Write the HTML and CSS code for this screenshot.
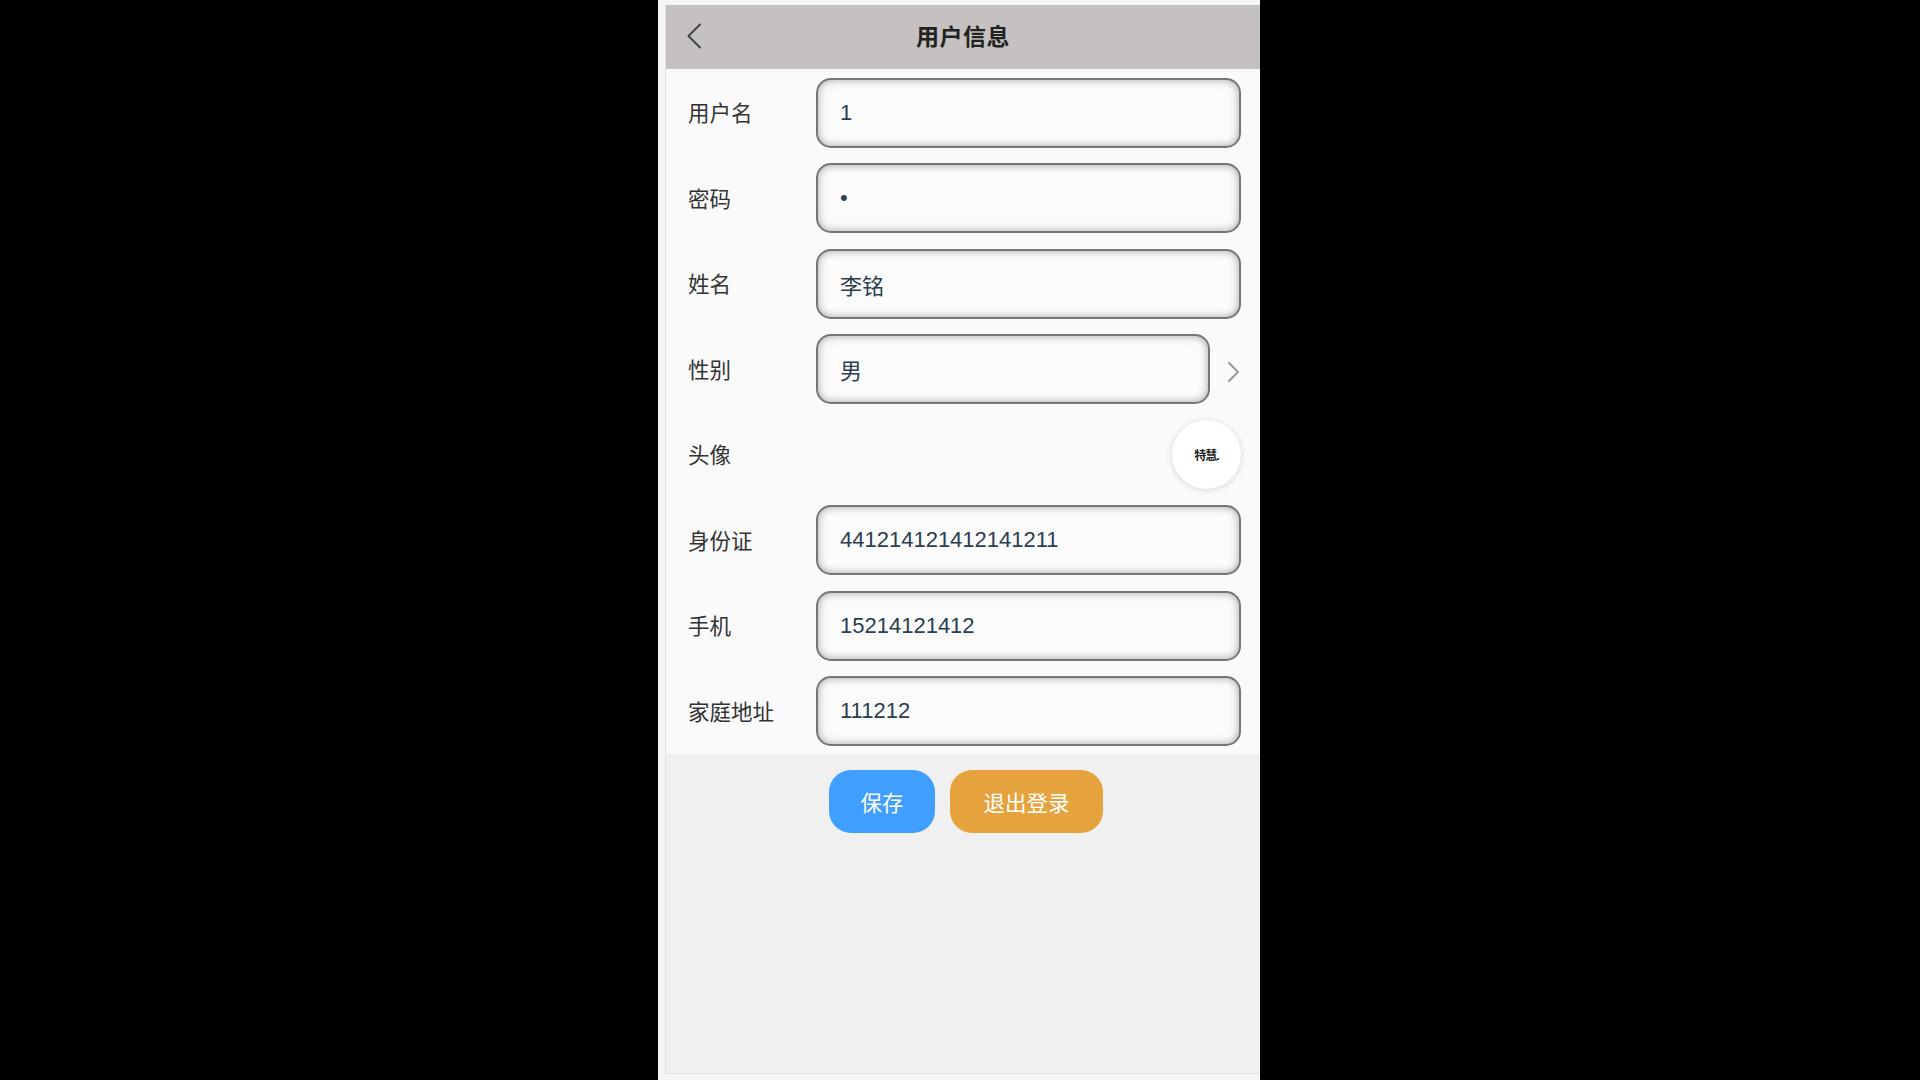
FILE: index.html
```html
<!DOCTYPE html>
<html lang="zh-CN">
<head>
  <meta charset="UTF-8" />
  <meta name="viewport" content="width=device-width, initial-scale=1.0" />
  <title>用户信息</title>
  <link rel="stylesheet" href="styles.css">
</head>
<body>
  <div class="phone">
    <div class="app">
      <!-- 顶部导航 -->
      <div class="header">
        <svg class="back" width="16" height="26" viewBox="0 0 16 26">
          <path d="M14 1.5 L2.5 13 L14 24.5" fill="none" stroke="#444" stroke-width="2" stroke-linecap="round" stroke-linejoin="round"/>
        </svg>
        <div class="title">用户信息</div>
      </div>

      <!-- 表单 -->
      <form class="info-form">
        <div class="row">
          <label class="label">用户名</label>
          <input class="field" type="text" value="1" />
        </div>
        <div class="row">
          <label class="label">密码</label>
          <input class="field" type="password" value="1" />
        </div>
        <div class="row">
          <label class="label">姓名</label>
          <input class="field" type="text" value="李铭" />
        </div>
        <div class="row">
          <label class="label">性别</label>
          <input class="field" type="text" value="男" />
          <span class="arrow">
            <svg width="14" height="22" viewBox="0 0 14 22">
              <path d="M2 2 L11 11 L2 20" fill="none" stroke="#999" stroke-width="2" stroke-linecap="round" stroke-linejoin="round"/>
            </svg>
          </span>
        </div>
        <div class="row">
          <label class="label">头像</label>
          <div class="avatar"><span>特慧.</span></div>
        </div>
        <div class="row">
          <label class="label">身份证</label>
          <input class="field" type="text" value="441214121412141211" />
        </div>
        <div class="row">
          <label class="label">手机</label>
          <input class="field" type="text" value="15214121412" />
        </div>
        <div class="row">
          <label class="label">家庭地址</label>
          <input class="field" type="text" value="111212" />
        </div>
      </form>

      <div class="actions">
        <button type="button" class="btn btn-save">保存</button>
        <button type="button" class="btn btn-logout">退出登录</button>
      </div>
    </div>
  </div>
</body>
</html>
```

FILE: styles.css
```css
html, body {
  margin: 0;
  height: 100%;
}

body {
  background-color: #000;
  display: flex;
  justify-content: center;
  font-family: "Liberation Sans", "Noto Sans CJK SC", sans-serif;
  color: #333;
}

.phone {
  width: 602px;
  height: 1080px;
  box-sizing: border-box;
  padding: 5px 0 6px 7px;
  margin-left: -2px;
  background-color: #f6f6f6;
}

.app {
  height: 100%;
  background-color: #f0f0f0;
  border-left: 1px solid #e2e2e2;
  border-bottom: 1px solid #e2e2e2;
  box-sizing: border-box;
  display: flex;
  flex-direction: column;
}

.header {
  position: relative;
  height: 64px;
  box-sizing: border-box;
  padding-bottom: 5px;
  background-color: #c5c1c0;
  display: flex;
  align-items: center;
  justify-content: center;
}

.back {
  position: absolute;
  left: 20px;
  top: 18px;
}

.title {
  font-size: 23px;
  font-weight: bold;
  color: #222;
  letter-spacing: 0.5px;
}

.info-form {
  background-color: #fafafa;
  padding-top: 1px;
}

.row {
  height: 85.5px;
  display: flex;
  align-items: center;
  padding: 0 19px 0 22px;
}

.label {
  width: 128px;
  flex-shrink: 0;
  font-size: 21.5px;
  color: #333;
  padding-bottom: 2px;
}

.field {
  flex: 1;
  min-width: 0;
  height: 70px;
  box-sizing: border-box;
  padding: 0 22px;
  font-family: "Liberation Sans", "Noto Sans CJK SC", sans-serif;
  font-size: 22px;
  color: #2c3e50;
  background-color: #fbfbfb;
  border: 2px solid #757575;
  border-radius: 15px;
  box-shadow: inset 0 0 9px rgba(0, 0, 0, 0.35);
  outline: none;
}

.arrow {
  width: 31px;
  display: flex;
  justify-content: flex-end;
  padding-top: 6px;
}

.avatar {
  margin-left: auto;
  width: 69px;
  height: 69px;
  border-radius: 50%;
  background-color: #fff;
  box-shadow: 0 1px 6px rgba(0, 0, 0, 0.15);
  display: flex;
  align-items: center;
  justify-content: center;
}

.avatar span {
  font-size: 12px;
  font-weight: bold;
  color: #222;
  letter-spacing: -1px;
}

.actions {
  display: flex;
  justify-content: center;
  gap: 15px;
  margin-top: 16px;
  padding-left: 6px;
}

.btn {
  height: 63px;
  padding: 0 26px;
  border: none;
  border-radius: 22px;
  font-family: "Liberation Sans", "Noto Sans CJK SC", sans-serif;
  font-size: 21.5px;
  color: #fff;
}

.btn-save {
  width: 106px;
  background-color: #409eff;
}

.btn-logout {
  width: 153px;
  background-color: #e6a23c;
}
```
